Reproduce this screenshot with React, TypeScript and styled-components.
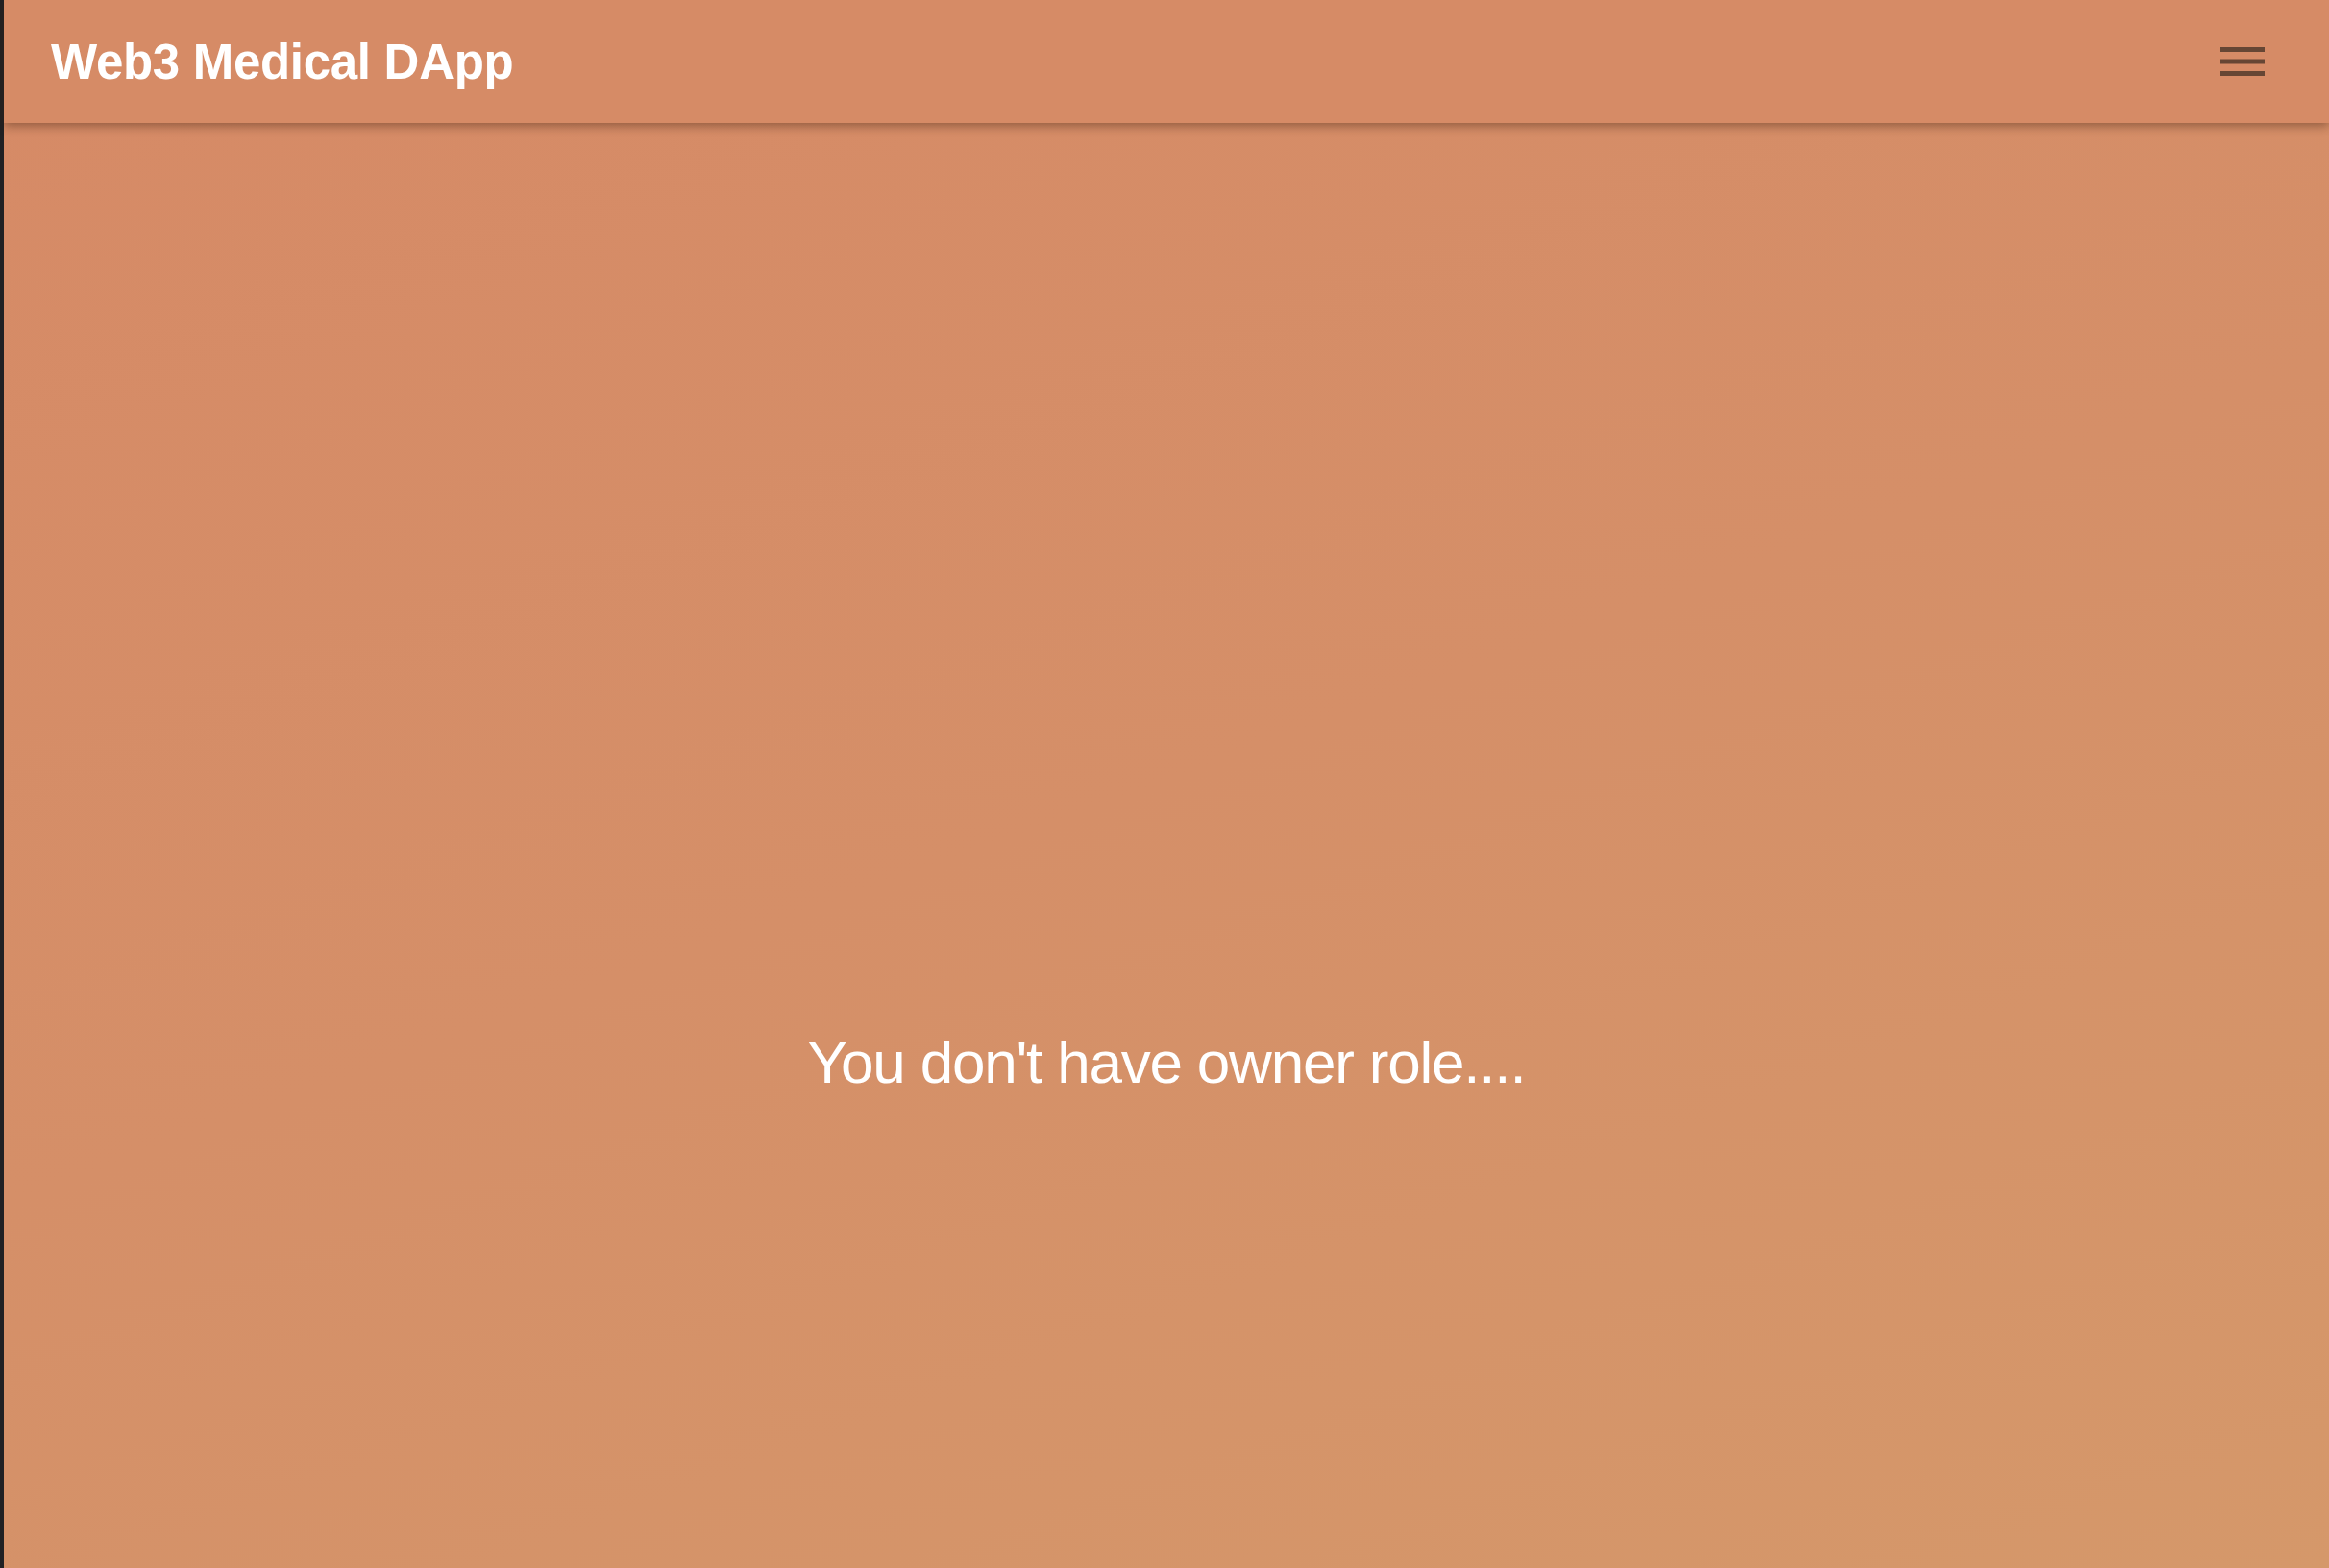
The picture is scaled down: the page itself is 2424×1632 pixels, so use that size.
import React from "react";
import styled, { createGlobalStyle } from "styled-components";

const GlobalStyle = createGlobalStyle`
  html, body {
    margin: 0;
    padding: 0;
    height: 100%;
  }
  body {
    font-family: "Liberation Sans", Arial, Helvetica, sans-serif;
    background: #202124;
  }
  #root {
    min-height: 100vh;
  }
`;

const Shell = styled.div`
  display: flex;
  flex-direction: row;
  min-height: 100vh;
`;

const EdgeStrip = styled.div`
  width: 4px;
  flex: 0 0 4px;
  background: #202124;
`;

const Page = styled.div`
  flex: 1;
  display: flex;
  flex-direction: column;
  background: linear-gradient(160deg, #d68a66 0%, #d58f68 50%, #d5986a 100%);
`;

const Header = styled.header`
  position: relative;
  z-index: 1;
  height: 128px;
  display: flex;
  align-items: center;
  justify-content: space-between;
  padding: 0 67px 0 49px;
  background: #d68b66;
  box-shadow: 0 3px 10px rgba(60, 30, 15, 0.45);
`;

const Title = styled.h1`
  margin: 0;
  font-family: "Liberation Sans", Arial, Helvetica, sans-serif;
  font-weight: 700;
  font-size: 51px;
  letter-spacing: -0.3px;
  color: #ffffff;
`;

const MenuButton = styled.button`
  display: flex;
  align-items: center;
  justify-content: center;
  background: none;
  border: none;
  padding: 0;
  width: 46px;
  height: 30px;
  cursor: pointer;
`;

const Main = styled.main`
  flex: 1;
  display: flex;
  justify-content: center;
  align-items: flex-start;
  padding-top: 942px;
`;

const Message = styled.p`
  margin: 0;
  font-family: "Liberation Sans", Arial, Helvetica, sans-serif;
  font-weight: 400;
  font-size: 62px;
  letter-spacing: -1.2px;
  color: #ffffff;
`;

export default function App() {
  return (
    <>
      <GlobalStyle />
      <Shell>
        <EdgeStrip />
        <Page>
          <Header>
            <Title>Web3 Medical DApp</Title>
            <MenuButton aria-label="menu">
              <svg width="46" height="30" viewBox="0 0 46 30">
                <rect x="0" y="0" width="46" height="5" fill="#664634" />
                <rect x="0" y="12.5" width="46" height="5" fill="#664634" />
                <rect x="0" y="25" width="46" height="5" fill="#664634" />
              </svg>
            </MenuButton>
          </Header>
          <Main>
            <Message>You don't have owner role....</Message>
          </Main>
        </Page>
      </Shell>
    </>
  );
}
